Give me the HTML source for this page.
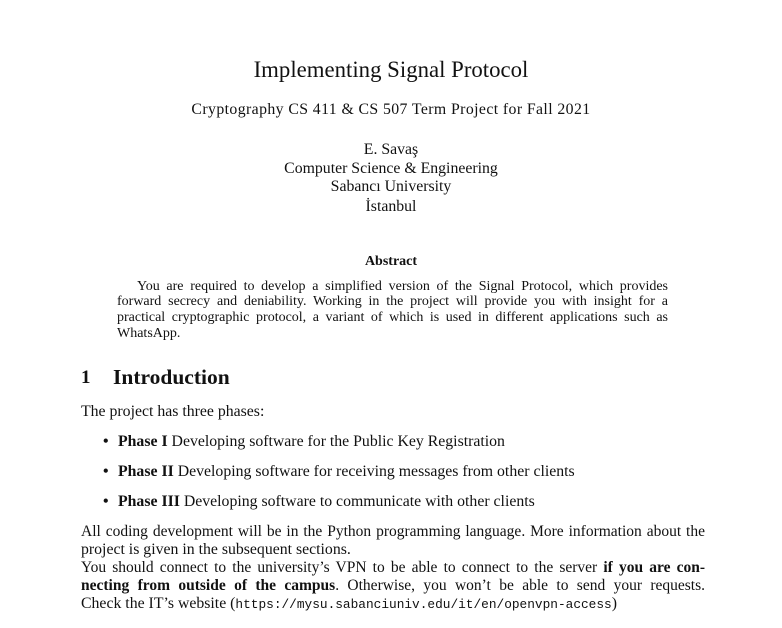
<!DOCTYPE html>
<html><head><meta charset="utf-8"><style>
body{margin:0;background:#fff;width:782px;height:628px;position:relative;overflow:hidden;font-family:"Liberation Serif",serif;color:#111}
.l{position:absolute;white-space:nowrap;line-height:18px}
.c{left:0;width:782px;text-align:center}
.j{text-align:justify;text-align-last:justify;white-space:normal}
.a{font-size:14px;line-height:16px}
.p{font-size:15.8px}
.j.p{font-size:15.5px;width:624px}
tt{font-family:"Liberation Mono",monospace;font-size:12.8px;letter-spacing:0}
</style></head><body>
<div class="l c" style="top:57px;font-size:22.8px;line-height:26px">Implementing Signal Protocol</div>
<div class="l c p" style="top:101px;letter-spacing:0.4px">Cryptography CS 411 &amp; CS 507 Term Project for Fall 2021</div>
<div class="l c p" style="top:141px">E. Savaş</div>
<div class="l c p" style="top:160px">Computer Science &amp; Engineering</div>
<div class="l c p" style="top:178px">Sabancı University</div>
<div class="l c p" style="top:198px">İstanbul</div>
<div class="l c a" style="top:254px;font-weight:bold">Abstract</div>
<div class="l a j" style="top:279px;left:137px;width:531px">You are required to develop a simplified version of the Signal Protocol, which provides</div>
<div class="l a j" style="top:294px;left:117px;width:551px">forward secrecy and deniability. Working in the project will provide you with insight for a</div>
<div class="l a j" style="top:310px;left:117px;width:551px">practical cryptographic protocol, a variant of which is used in different applications such as</div>
<div class="l a" style="top:326px;left:117px">WhatsApp.</div>
<div class="l" style="top:366px;left:81px;font-size:19px;line-height:24px;font-weight:bold">1</div>
<div class="l" style="top:365px;left:113px;font-size:21.5px;line-height:24px;font-weight:bold">Introduction</div>
<div class="l p" style="top:403px;left:81px">The project has three phases:</div>
<div class="l p" style="top:433px;left:103px;font-weight:bold">•</div><div class="l p" style="top:433px;left:118px"><b>Phase I</b> Developing software for the Public Key Registration</div>
<div class="l p" style="top:463px;left:103px;font-weight:bold">•</div><div class="l p" style="top:463px;left:118px"><b>Phase II</b> Developing software for receiving messages from other clients</div>
<div class="l p" style="top:493px;left:103px;font-weight:bold">•</div><div class="l p" style="top:493px;left:118px"><b>Phase III</b> Developing software to communicate with other clients</div>
<div class="l p j" style="top:523px;left:81px">All coding development will be in the Python programming language. More information about the</div>
<div class="l p" style="top:541px;left:81px">project is given in the subsequent sections.</div>
<div class="l p j" style="top:559px;left:81px">You should connect to the university’s VPN to be able to connect to the server <b>if you are con-</b></div>
<div class="l p j" style="top:577px;left:81px"><b>necting from outside of the campus</b>. Otherwise, you won’t be able to send your requests.</div>
<div class="l p" style="top:595px;left:81px">Check the IT’s website (<tt>https://mysu.sabanciuniv.edu/it/en/openvpn-access</tt>)</div>
</body></html>
